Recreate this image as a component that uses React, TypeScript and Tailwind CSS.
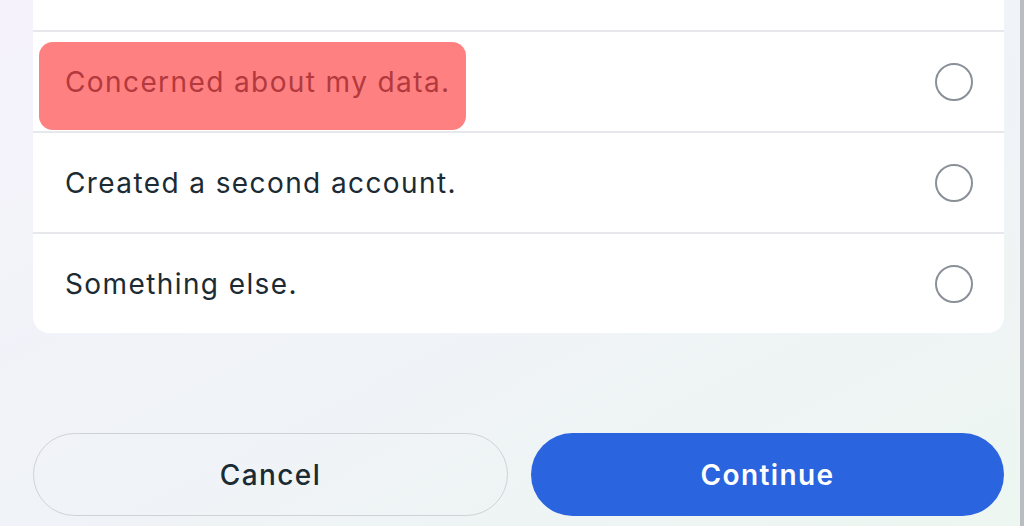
import React from 'react';

const reasons = [
  { label: 'Concerned about my data.', flagged: true },
  { label: 'Created a second account.', flagged: false },
  { label: 'Something else.', flagged: false },
];

function Radio() {
  return <span className="block size-[38px] shrink-0 rounded-full border-[2.5px] border-[#8a9098]" />;
}

export default function App() {
  return (
    <div
      className="flex h-[526px] w-[1024px] overflow-hidden bg-gradient-to-br from-[#f5f2fb] via-[#f0f3f8] to-[#edf6f1] text-[#1c2b33]"
      style={{ fontFamily: 'Inter, "Noto Sans", sans-serif' }}
    >
      <div className="flex flex-1 flex-col pl-[33px] pr-[16px]">
        {/* Reasons list (top of the card is scrolled off) */}
        <div className="flex flex-col rounded-b-[16px] bg-white">
          <div className="h-[30px]" />
          {reasons.map((r) => (
            <div
              key={r.label}
              className="flex h-[101px] items-center justify-between border-t-2 border-[#e6e8eb] pl-[32px] pr-[31px]"
            >
              {r.flagged ? (
                <span className="-ml-[26px] mt-[8px] rounded-[14px] bg-[#ff8080] pb-[32px] pl-[26px] pr-[15px] pt-[24px] text-[28px] leading-[32px] tracking-[0.05em] text-[#b23a3e]">
                  {r.label}
                </span>
              ) : (
                <span className="text-[28px] leading-[32px] tracking-[0.05em]">{r.label}</span>
              )}
              <Radio />
            </div>
          ))}
        </div>

        <div className="mt-[100px] flex gap-[23px]">
          <button className="flex h-[83px] flex-1 items-center justify-center rounded-full border-[1.5px] border-[#cfd2d6] text-[28px] font-medium tracking-[0.05em] text-[#1c2b33]">
            Cancel
          </button>
          <button className="flex h-[83px] flex-1 items-center justify-center rounded-full bg-[#2a64de] text-[28px] font-semibold tracking-[0.05em] text-white">
            Continue
          </button>
        </div>
      </div>
      <div className="w-[4px] bg-[#b9bdc2]" />
    </div>
  );
}
